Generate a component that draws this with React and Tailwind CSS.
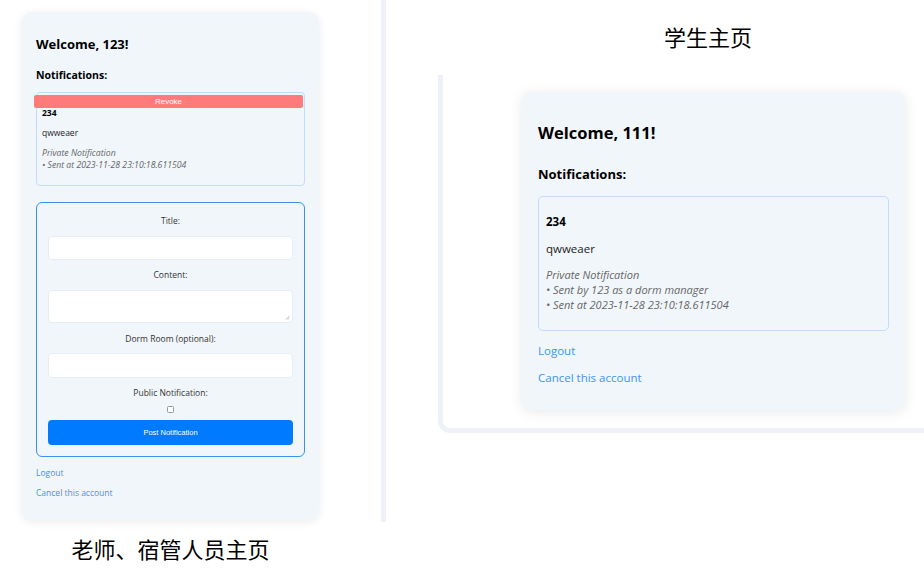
import React from "react";

const ui = { fontFamily: '"Open Sans", "Noto Sans", sans-serif' };
const arial = { fontFamily: '"Liberation Sans", Arial, sans-serif' };
const cjk = { fontFamily: '"Noto Sans CJK SC", sans-serif' };

const TeacherCard = () => (
  <div className="ml-[22px] mt-[12px] w-[297px] h-[508px] bg-[#f1f6fb] rounded-[10px] shadow-[0_2px_10px_rgba(0,0,0,0.08)] px-[14px] pt-[23px]" style={ui}>
    <h2 className="text-[13px] leading-[18px] font-bold text-black">Welcome, 123!</h2>
    <h3 className="mt-[15px] text-[10.5px] leading-[14px] font-bold text-black">Notifications:</h3>

    <div className="mt-[10px] h-[94px] border border-[#c3dcfa] rounded-[4px] pt-[2px] px-[5px]">
      <button className="block -ml-[8px] w-[269px] h-[13px] bg-[#ff7b7b] rounded-[2px] text-white text-[8px] leading-[13px]" style={arial}>
        Revoke
      </button>
      <p className="mt-[-1px] text-[8.5px] leading-[12px] font-bold text-black">234</p>
      <p className="mt-[8px] text-[8.5px] leading-[12px] text-[#222]">qwweaer</p>
      <div className="mt-[8px] text-[8.7px] leading-[12px] italic text-[#666]">
        <p>Private Notification</p>
        <p>• Sent at 2023-11-28 23:10:18.611504</p>
      </div>
    </div>

    <div className="mt-[16px] h-[255px] border-[1.5px] border-[#3d8ff2] rounded-[6px] px-[11px] pt-[12px] flex flex-col items-center text-[8.5px] text-[#333]">
      <label className="leading-[12px]">Title:</label>
      <div className="mt-[9px] w-full h-[24px] bg-white rounded-[4px] border border-[#e6edf5]" />
      <label className="mt-[9px] leading-[12px]">Content:</label>
      <div className="mt-[9px] w-full h-[33px] bg-white rounded-[4px] border border-[#e6edf5] relative">
        <svg className="absolute right-[2px] bottom-[2px]" width="5" height="5" viewBox="0 0 5 5">
          <path d="M1 4.5 L4.5 1 M3 4.5 L4.5 3" stroke="#888" strokeWidth="0.6" />
        </svg>
      </div>
      <label className="mt-[10px] leading-[12px]">Dorm Room (optional):</label>
      <div className="mt-[8px] w-full h-[25px] bg-white rounded-[4px] border border-[#e6edf5]" />
      <label className="mt-[9px] leading-[12px]">Public Notification:</label>
      <div className="mt-[7px] w-[7px] h-[7px] border border-[#999] rounded-[1.5px] bg-white" />
      <button className="mt-[7px] w-full h-[25px] bg-[#007bff] rounded-[4px] text-white text-[7.5px]" style={arial}>
        Post Notification
      </button>
    </div>

    <p className="mt-[10px] text-[8.5px] leading-[12px] text-[#3f93f0]">Logout</p>
    <p className="mt-[8px] text-[8.5px] leading-[12px] text-[#3f93f0]">Cancel this account</p>
  </div>
);

const StudentCard = () => (
  <div className="ml-[79px] mt-[17px] w-[383px] h-[318px] bg-[#f1f6fb] rounded-[8px] shadow-[0_2px_14px_rgba(0,0,0,0.09)] px-[16px] pt-[30px]" style={ui}>
    <h2 className="text-[16.5px] leading-[22px] font-bold text-black">Welcome, 111!</h2>
    <h3 className="mt-[21px] text-[13px] leading-[18px] font-bold text-black">Notifications:</h3>

    <div className="mt-[13px] h-[135px] border-[1.5px] border-[#c3dcfa] rounded-[5px] px-[7px] pt-[17px]">
      <p className="text-[11.5px] leading-[16px] font-bold text-black">234</p>
      <p className="mt-[11px] text-[11.5px] leading-[16px] text-[#222]">qwweaer</p>
      <div className="mt-[10px] text-[11px] leading-[15px] italic text-[#666]">
        <p>Private Notification</p>
        <p>• Sent by 123 as a dorm manager</p>
        <p>• Sent at 2023-11-28 23:10:18.611504</p>
      </div>
    </div>

    <p className="mt-[12px] text-[11.5px] leading-[16px] text-[#3f93f0]">Logout</p>
    <p className="mt-[11px] text-[11.5px] leading-[16px] text-[#3f93f0]">Cancel this account</p>
  </div>
);

export default function App() {
  return (
    <div className="w-[924px] h-[574px] bg-white flex overflow-hidden">
      <div className="w-[381px] flex flex-col">
        <TeacherCard />
        <p className="mt-[14px] pr-[40px] text-center text-[22px] leading-[28px] text-black" style={cjk}>
          老师、宿管人员主页
        </p>
      </div>

      <div className="w-[5px] h-[522px] bg-[#eef2f8]" />

      <div className="flex-1 flex flex-col">
        <p className="mt-[21px] pl-[106px] text-center text-[22px] leading-[30px] text-black" style={cjk}>
          学生主页
        </p>
        <div className="mt-[24px] ml-[52px] h-[358px] bg-white border-l-[5px] border-b-[5px] border-[#eef2f8] rounded-bl-[12px]">
          <StudentCard />
        </div>
      </div>
    </div>
  );
}
